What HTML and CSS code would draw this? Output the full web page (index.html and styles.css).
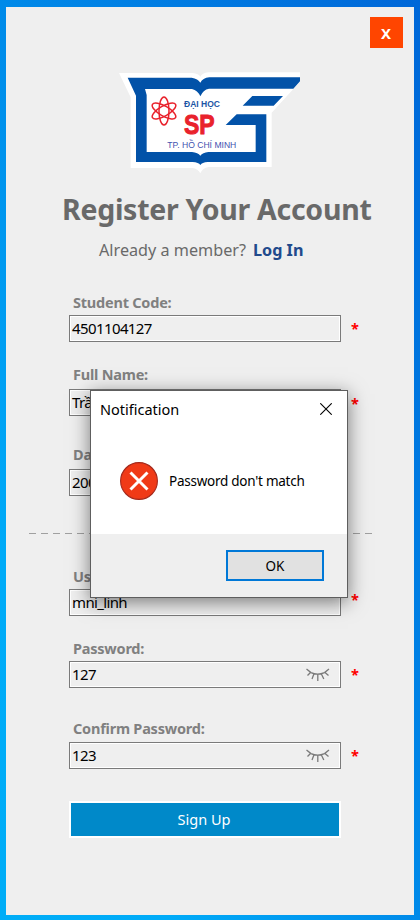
FILE: index.html
```html
<!DOCTYPE html>
<html lang="en">
<head>
<meta charset="utf-8">
<title>Register Your Account</title>
<link rel="stylesheet" href="styles.css">
</head>
<body>
<svg class="defs" width="0" height="0" aria-hidden="true">
  <symbol id="eye" viewBox="0 0 24 14">
    <path d="M.5 1L5 4.600Q11.500 7.700 18.500 4.600L23 1M4.500 4.500L1.500 7.500M19 4.500L22.500 7.500M7.800 6.200L6 11M11.800 6.600V13M15.500 6.200L17.800 11" fill="none" stroke="#7a7a7a" stroke-width="1.3"/>
  </symbol>
</svg>
<main class="window">
  <header class="bar"><button class="close" type="button"><span>X</span></button></header>
  <svg class="logo" viewBox="0 0 600 360" role="img" aria-label="Đại học SP TP. Hồ Chí Minh">
    <path fill="#fff" d="M27 39H248Q266 41 271 50Q276 39 295 37H570V65L485 158V321H296Q277 324 271 340Q264 326 247 324H62V112Z"/>
    <path fill="#0252a8" d="M53 53H245Q264 56 271 68Q278 54 298 52H570V64L550 86H297Q279 89 271 109Q263 91 246 87H105L110 105V276H246Q264 278 271 287Q278 278 295 276H437V195H347L380 163H469V306H293Q276 307 271 315Q266 307 248 306H78V107ZM427 108H519L491 137H398Z"/>
    <g fill="none" stroke="#e9222c" stroke-width="4.500">
      <ellipse cx="162" cy="153" rx="15" ry="42"/>
      <ellipse cx="162" cy="153" rx="15" ry="40" transform="rotate(60 162 153)"/>
      <ellipse cx="162" cy="153" rx="15" ry="40" transform="rotate(120 162 153)"/>
    </g>
    <text class="logo-top" x="222" y="140" textLength="108" lengthAdjust="spacingAndGlyphs">ĐẠI HỌC</text>
    <text class="logo-sp" x="222" y="222" textLength="92" lengthAdjust="spacingAndGlyphs">SP</text>
    <text class="logo-city" x="172" y="264" textLength="207" lengthAdjust="spacingAndGlyphs">TP. HỒ CHÍ MINH</text>
  </svg>
  <h1><span>Register Your Account</span></h1>
  <p class="member"><span class="ask">Already a member?</span><a class="login">Log In</a></p>

  <form class="form">
    <div class="field code"><label>Student Code:</label>
      <div class="row"><div class="input">4501104127</div><span class="star">*</span></div></div>
    <div class="field name"><label>Full Name:</label>
      <div class="row"><div class="input">Trần</div><span class="star">*</span></div></div>
    <div class="field date"><label>Date:</label>
      <div class="row"><div class="input">2001</div></div></div>
    <svg class="divider" width="344" height="1"><path d="M0 .5H344" stroke="#a0a0a0" stroke-dasharray="7 5"/></svg>
    <div class="field user"><label>Username:</label>
      <div class="row"><div class="input">mni_linh</div><span class="star">*</span></div></div>
    <div class="field pass"><label>Password:</label>
      <div class="row"><div class="input">127<svg class="eye"><use href="#eye"/></svg></div><span class="star">*</span></div></div>
    <div class="field confirm"><label>Confirm Password:</label>
      <div class="row"><div class="input">123<svg class="eye"><use href="#eye"/></svg></div><span class="star">*</span></div></div>
    <button class="signup" type="button">Sign Up</button>
  </form>
</main>

<section class="dialog" role="dialog">
  <header class="dialog-head"><span class="dialog-title">Notification</span>
    <svg width="12" height="12" viewBox="0 0 12 12"><path d="M.3.3L11.700 11.700M11.700.3L.3 11.700" stroke="#000" stroke-width="1.100"/></svg>
  </header>
  <div class="dialog-body">
    <svg width="38" height="38" viewBox="0 0 38 38"><circle cx="19" cy="19" r="18.400" fill="#f03a17" stroke="#a3291c" stroke-width="1.100"/><path d="M10.500 10.500L27.500 27.500M27.500 10.500L10.500 27.500" stroke="#fff" stroke-width="3"/></svg>
    <span class="message">Password don't match</span>
  </div>
  <footer class="dialog-foot"><button class="ok" type="button">OK</button></footer>
</section>
</body>
</html>
```

FILE: styles.css
```css
* { box-sizing: border-box; }
body {
  margin: 0;
  width: 420px;
  height: 920px;
  padding: 7px 6px 5px;
  overflow: hidden;
  font-family: "Noto Sans", "Open Sans", sans-serif;
  background: linear-gradient(to top right, #00adf7 0%, #00abf8 20%, #008ae9 50%, #0067d8 100%);
}
h1, p { margin: 0; }
button { font-family: inherit; padding: 0; border-radius: 0; }
.defs { position: absolute; }
.window {
  width: 408px;
  height: 908px;
  background: #efefef;
  display: flex;
  flex-direction: column;
}
.bar { display: flex; justify-content: flex-end; padding: 10px 11px 0 0; height: 53px; }
.close {
  width: 33px;
  height: 31px;
  border: 0;
  padding-right: 1px;
  background: #ff4500;
  color: #fff;
  font-weight: 700;
  font-size: 15px;
}
.logo { width: 200px; height: 120px; margin-left: 104px; }
.logo text { font-family: "Liberation Sans", sans-serif; }
.logo-top { font-size: 28px; font-weight: 700; fill: #1c55a5; }
.logo-sp { font-size: 84px; font-weight: 700; fill: #e9222c; stroke: #e9222c; stroke-width: 3px; }
.logo-city { font-size: 28px; fill: #4252b0; }
h1 {
  margin-left: 56px;
  height: 58px;
  line-height: 59px;
  font-size: 28.500px;
  letter-spacing: -.28px;
  color: #696969;
  white-space: nowrap;
}
.member { height: 26px; line-height: 24px; margin-left: 93px; font-size: 16.200px; color: #696969; white-space: nowrap; }
.login { margin-left: 7px; font-weight: 700; color: #214a8c; }
.form { padding-left: 63px; margin-top: 28px; }
.field label {
  display: block;
  height: 20px;
  line-height: 20px;
  padding-left: 4px;
  font-size: 14.500px;
  font-weight: 700;
  letter-spacing: -.22px;
  color: #808080;
}
.row { display: flex; margin-top: 3px; gap: 10px; }
.input {
  width: 272px;
  height: 27px;
  padding: 0 10px 0 2px;
  border: 1px solid #7a7a7a;
  box-shadow: inset 0 0 0 1px #fff;
  line-height: 25px;
  font-size: 15px;
  letter-spacing: -.6px;
  color: #000;
  display: flex;
  align-items: center;
  justify-content: space-between;
}
.eye { width: 24px; height: 14px; }
.star { color: #f00; font-weight: 700; font-size: 14.500px; line-height: 27px; height: 27px; }
.name { margin-top: 22px; }
.name .row, .date .row { margin-top: 5px; }
.name .star { line-height: 29px; }
.date { margin-top: 28px; }
.divider { display: block; margin: 37px 0 32px -40px; }
.user .input { letter-spacing: -.65px; }
.user .star { line-height: 21px; }
.pass { margin-top: 22px; }
.confirm { margin-top: 30px; }
.confirm .row { margin-top: 4px; }
.signup {
  display: block;
  width: 272px;
  height: 37px;
  margin-top: 32px;
  padding: 0 2px 2px 0;
  border: 2px solid #fff;
  background: #0089c9;
  color: #fff;
  font-size: 14.500px;
}
.dialog {
  position: absolute;
  left: 90px;
  top: 390px;
  width: 258px;
  height: 208px;
  border: 1px solid #5e5e5e;
  background: #fff;
  box-shadow: 0 4px 18px rgba(0, 0, 0, .5);
  color: #000;
}
.dialog-head { height: 36px; display: flex; align-items: center; justify-content: space-between; padding: 0 15px 0 9px; font-size: 14.500px; }
.dialog-body { height: 107px; padding-top: 1px; display: flex; align-items: center; padding-left: 29px; gap: 11px; font-size: 13.500px; letter-spacing: -.25px; }
.dialog-foot { height: 63px; background: #efefef; padding: 16px 23px; display: flex; justify-content: flex-end; }
.ok { width: 98px; height: 31px; border: 2px solid #0078d7; background: #e1e1e1; font-size: 13.500px; color: #000; }
```
